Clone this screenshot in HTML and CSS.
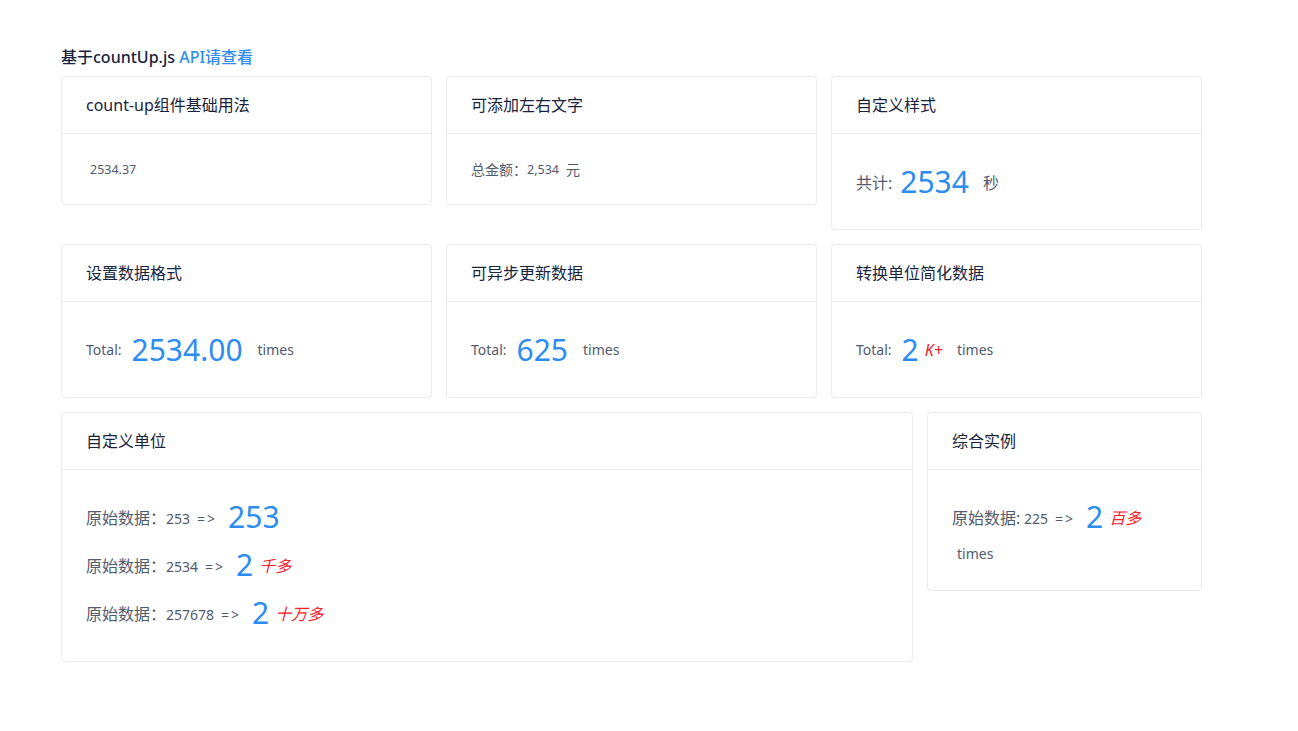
FILE: index.html
```html
<!DOCTYPE html>
<html lang="zh-CN">
<head>
<meta charset="utf-8">
<title>count-up</title>
<link rel="stylesheet" href="styles.css">
</head>
<body>
<div class="page">
  <p class="intro">基于countUp.js <a class="link">API请查看</a></p>

  <div class="grid cols-3">
    <div class="card">
      <div class="card-head">count-up组件基础用法</div>
      <div class="card-body">
        <div class="small"><span class="indent">2534.37</span></div>
      </div>
    </div>
    <div class="card">
      <div class="card-head">可添加左右文字</div>
      <div class="card-body">
        <div class="small"><span class="cn-sm">总金额：</span><span>2,534</span><span class="cn-sm small-suffix">元</span></div>
      </div>
    </div>
    <div class="card">
      <div class="card-head">自定义样式</div>
      <div class="card-body">
        <div class="stat"><span class="label cn">共计:</span><span class="num">2534</span><span class="suffix cn">秒</span></div>
      </div>
    </div>
  </div>

  <div class="grid cols-3">
    <div class="card">
      <div class="card-head">设置数据格式</div>
      <div class="card-body">
        <div class="stat"><span class="label latin">Total:</span><span class="num">2534.00</span><span class="suffix wide">times</span></div>
      </div>
    </div>
    <div class="card">
      <div class="card-head">可异步更新数据</div>
      <div class="card-body">
        <div class="stat"><span class="label latin">Total:</span><span class="num">625</span><span class="suffix wide">times</span></div>
      </div>
    </div>
    <div class="card">
      <div class="card-head">转换单位简化数据</div>
      <div class="card-body">
        <div class="stat"><span class="label latin">Total:</span><span class="num">2</span><span class="unit">K+</span><span class="suffix">times</span></div>
      </div>
    </div>
  </div>

  <div class="grid cols-2">
    <div class="card">
      <div class="card-head">自定义单位</div>
      <div class="card-body tight">
        <div class="stat tall"><span class="label wide-gap"><span class="cn">原始数据：</span>253<span class="arrow">=&gt;</span></span><span class="num">253</span></div>
        <div class="stat tall"><span class="label wide-gap"><span class="cn">原始数据：</span>2534<span class="arrow">=&gt;</span></span><span class="num">2</span><span class="unit">千多</span></div>
        <div class="stat tall"><span class="label wide-gap"><span class="cn">原始数据：</span>257678<span class="arrow">=&gt;</span></span><span class="num">2</span><span class="unit">十万多</span></div>
      </div>
    </div>
    <div class="card">
      <div class="card-head">综合实例</div>
      <div class="card-body tight">
        <div class="stat tall"><span class="label wide-gap"><span class="cn">原始数据:</span> 225<span class="arrow">=&gt;</span></span><span class="num">2</span><span class="unit">百多</span></div>
        <div class="trail">times</div>
      </div>
    </div>
  </div>
</div>
</body>
</html>
```
FILE: styles.css
```css
* { box-sizing: border-box; }

body {
  margin: 0;
  background: #fff;
  color: #515a6e;
  font-family: "Noto Sans", "Noto Sans CJK SC", sans-serif;
}

.page {
  width: 1202px;
  padding: 46px 0 0 61px;
}

.intro {
  margin: 0 0 8px;
  font-size: 16px;
  line-height: 22px;
  font-weight: 500;
  color: #17233d;
}

.link {
  color: #2d8cf0;
  text-decoration: none;
}

.grid {
  display: grid;
  gap: 14px;
  margin-bottom: 14px;
  align-items: start;
}

.cols-3 { grid-template-columns: repeat(3, 371px); }
.cols-2 { grid-template-columns: 852px 275px; }

.card {
  background: #fff;
  border: 1px solid #e8eaec;
  border-radius: 4px;
}

.card-head {
  padding: 16px 24px;
  border-bottom: 1px solid #e8eaec;
  font-size: 16px;
  line-height: 24px;
  color: #17233d;
}

.card-body {
  padding: 24px;
}

.card-body.tight {
  padding: 23px 24px 24px;
}

.small {
  display: flex;
  align-items: center;
  height: 22px;
  font-size: 12.5px;
}

.indent { margin-left: 4px; }

.cn-sm { font-size: 14px; }

.small-suffix { margin-left: 7px; }

.stat {
  display: flex;
  align-items: center;
  height: 47px;
  font-size: 14px;
}

.stat.tall { height: 48px; }

.cn { font-size: 16px; }

.label { margin-right: 8px; white-space: pre; }
.label.latin { margin-right: 10px; }
.label.wide-gap { margin-right: 11px; }

.arrow {
  margin-left: 7px;
  letter-spacing: 2px;
}

.num {
  font-size: 30px;
  line-height: 1;
  color: #2d8cf0;
}

.unit {
  margin-left: 6px;
  font-size: 16px;
  font-style: italic;
  color: #f5222d;
}

.suffix { margin-left: 14px; }
.suffix.wide { margin-left: 15px; }

.trail {
  height: 25px;
  line-height: 25px;
  padding-left: 5px;
  font-size: 14px;
}
```
